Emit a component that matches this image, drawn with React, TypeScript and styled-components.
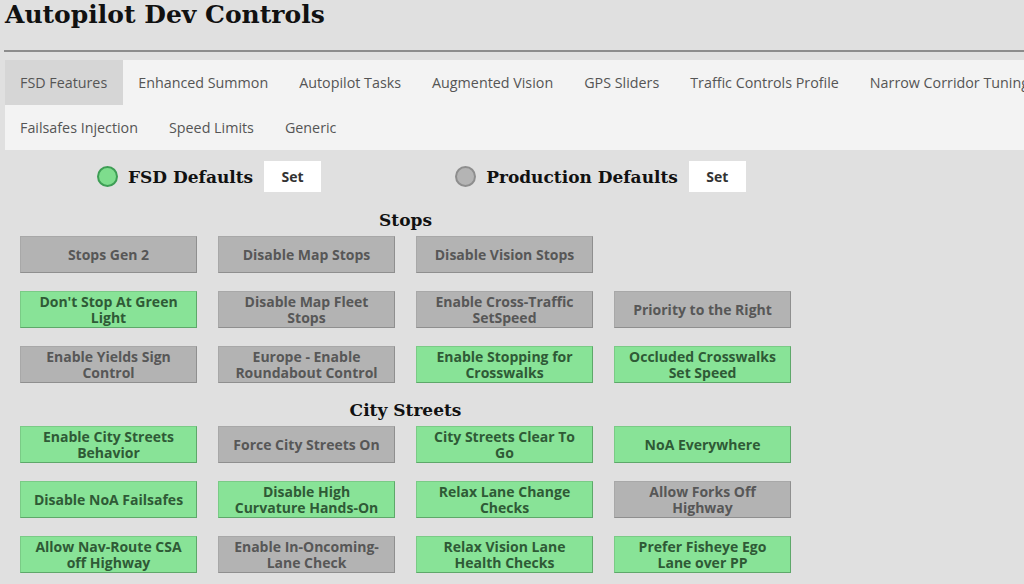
import React, { useState } from 'react'
import styled, { createGlobalStyle } from 'styled-components'

const GlobalStyle = createGlobalStyle`
    html, body {
        margin: 0;
        padding: 0;
        background: #e0e0e0;
        overflow: hidden;
    }
`

const serif = `'DejaVu Serif', 'Liberation Serif', serif`
const sans = `'Open Sans', 'Noto Sans', 'DejaVu Sans', sans-serif`

type Toggle = { label: string; on: boolean }

const tabs = [
    'FSD Features',
    'Enhanced Summon',
    'Autopilot Tasks',
    'Augmented Vision',
    'GPS Sliders',
    'Traffic Controls Profile',
    'Narrow Corridor Tuning',
    'Failsafes Injection',
    'Speed Limits',
    'Generic',
]

const stops: (Toggle | null)[] = [
    { label: 'Stops Gen 2', on: false },
    { label: 'Disable Map Stops', on: false },
    { label: 'Disable Vision Stops', on: false },
    null,
    { label: "Don't Stop At Green\nLight", on: true },
    { label: 'Disable Map Fleet\nStops', on: false },
    { label: 'Enable Cross-Traffic\nSetSpeed', on: false },
    { label: 'Priority to the Right', on: false },
    { label: 'Enable Yields Sign\nControl', on: false },
    { label: 'Europe - Enable\nRoundabout Control', on: false },
    { label: 'Enable Stopping for\nCrosswalks', on: true },
    { label: 'Occluded Crosswalks\nSet Speed', on: true },
]

const cityStreets: (Toggle | null)[] = [
    { label: 'Enable City Streets\nBehavior', on: true },
    { label: 'Force City Streets On', on: false },
    { label: 'City Streets Clear To\nGo', on: true },
    { label: 'NoA Everywhere', on: true },
    { label: 'Disable NoA Failsafes', on: true },
    { label: 'Disable High\nCurvature Hands-On', on: true },
    { label: 'Relax Lane Change\nChecks', on: true },
    { label: 'Allow Forks Off\nHighway', on: false },
    { label: 'Allow Nav-Route CSA\noff Highway', on: true },
    { label: 'Enable In-Oncoming-\nLane Check', on: false },
    { label: 'Relax Vision Lane\nHealth Checks', on: true },
    { label: 'Prefer Fisheye Ego\nLane over PP', on: true },
]

const ToggleGrid = ({ items }: { items: (Toggle | null)[] }) => {
    const [state, setState] = useState(items.map((i) => (i ? i.on : false)))
    return (
        <Grid>
            {items.map((item, idx) =>
                item ? (
                    <ToggleButton
                        key={idx}
                        $on={state[idx]}
                        onClick={() =>
                            setState((s) => s.map((v, i) => (i === idx ? !v : v)))
                        }
                    >
                        {item.label}
                    </ToggleButton>
                ) : (
                    <span key={idx} />
                )
            )}
        </Grid>
    )
}

export default function App() {
    const [activeTab, setActiveTab] = useState(0)
    const [preset, setPreset] = useState<'fsd' | 'prod'>('fsd')

    return (
        <Page>
            <GlobalStyle />
            <Title>Autopilot Dev Controls</Title>
            <Rule />
            <TabBar>
                {tabs.map((t, i) => (
                    <Tab key={t} $active={i === activeTab} onClick={() => setActiveTab(i)}>
                        {t}
                    </Tab>
                ))}
            </TabBar>
            <Defaults>
                <Preset>
                    <Dot $on={preset === 'fsd'} />
                    <PresetName>FSD Defaults</PresetName>
                    <SetButton onClick={() => setPreset('fsd')}>Set</SetButton>
                </Preset>
                <Preset>
                    <Dot $on={preset === 'prod'} />
                    <PresetName>Production Defaults</PresetName>
                    <SetButton onClick={() => setPreset('prod')}>Set</SetButton>
                </Preset>
            </Defaults>
            <Section>
                <SectionTitle>Stops</SectionTitle>
                <ToggleGrid items={stops} />
                <SectionTitle>City Streets</SectionTitle>
                <ToggleGrid items={cityStreets} />
            </Section>
        </Page>
    )
}

const Page = styled.div`
    padding-left: 4px;
    width: 1200px;
`

const Title = styled.h1`
    margin: 0;
    padding: 0 0 0 1px;
    font-family: ${serif};
    font-size: 25px;
    font-weight: bold;
    line-height: 30px;
    color: #111;
`

const Rule = styled.div`
    margin-top: 20px;
    height: 2px;
    background: #8c8c8c;
`

const TabBar = styled.div`
    margin: 8px 0 0 1px;
    width: 1100px;
    display: flex;
    flex-wrap: wrap;
    background: #f3f3f3;
`

const Tab = styled.div<{ $active: boolean }>`
    height: 45px;
    padding: 0 16px 0 15px;
    display: flex;
    align-items: center;
    font-family: ${sans};
    font-size: 14.3px;
    color: #555;
    cursor: pointer;
    background: ${(p) => (p.$active ? '#d6d6d6' : 'transparent')};
`

const Defaults = styled.div`
    margin-top: 11px;
    padding-left: 93px;
    display: flex;
    align-items: center;
    gap: 134px;
`

const Preset = styled.div`
    display: flex;
    align-items: center;
`

const Dot = styled.span<{ $on: boolean }>`
    width: 17px;
    height: 17px;
    border-radius: 50%;
    border: 2px solid ${(p) => (p.$on ? '#3e9e55' : '#8e8e8e')};
    background: ${(p) => (p.$on ? '#7edd8d' : '#b4b4b4')};
`

const PresetName = styled.span`
    margin: 0 11px 0 10px;
    font-family: ${serif};
    font-size: 17px;
    font-weight: bold;
    color: #111;
`

const SetButton = styled.button`
    width: 57px;
    height: 31px;
    border: none;
    background: #fff;
    font-family: ${sans};
    font-size: 14px;
    font-weight: bold;
    color: #333;
    cursor: pointer;
`

const Section = styled.div`
    margin: 18px 0 0 16px;
    width: 771px;
`

const SectionTitle = styled.h2`
    margin: 0 0 6px;
    text-align: center;
    font-family: ${serif};
    font-size: 17px;
    font-weight: bold;
    line-height: 20px;
    color: #111;
    & + div {
        margin-bottom: 17px;
    }
`

const Grid = styled.div`
    display: grid;
    grid-template-columns: repeat(4, 177px);
    grid-auto-rows: 37px;
    column-gap: 21px;
    row-gap: 18px;
`

const ToggleButton = styled.button<{ $on: boolean }>`
    padding: 0 4px;
    white-space: pre-line;
    font-family: ${sans};
    font-size: 14px;
    font-weight: bold;
    line-height: 16px;
    text-align: center;
    cursor: pointer;
    border: 1px solid ${(p) => (p.$on ? '#7acb86' : '#a8a8a8')};
    border-right-color: ${(p) => (p.$on ? '#5ea86a' : '#8f8f8f')};
    border-bottom-color: ${(p) => (p.$on ? '#5ea86a' : '#8f8f8f')};
    background: ${(p) => (p.$on ? '#88e397' : '#b3b3b3')};
    color: ${(p) => (p.$on ? '#2f5a36' : '#575757')};
`
